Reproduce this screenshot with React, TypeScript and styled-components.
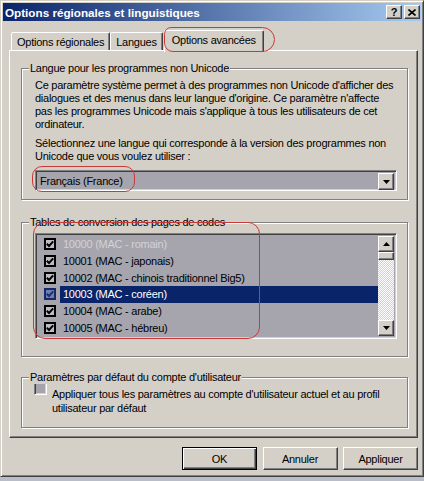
import styled, { createGlobalStyle, css } from "styled-components";

const GlobalStyle = createGlobalStyle`
  html, body {
    margin: 0;
    padding: 0;
    background: #b9bdc7;
  }
  body {
    font-family: "Liberation Sans", Arial, sans-serif;
    font-size: 11px;
    letter-spacing: -0.25px;
    color: #000;
  }
  * { box-sizing: border-box; }
`;

const raised = css`
  background: #d4d0c8;
  border: 1px solid;
  border-color: #fff #404040 #404040 #fff;
  box-shadow: inset -1px -1px 0 #808080;
`;

const sunken = css`
  border: 1px solid;
  border-color: #808080 #fff #fff #808080;
  box-shadow: inset 1px 1px 0 #404040, inset -1px -1px 0 #d4d0c8;
`;

const Window = styled.div`
  position: relative;
  width: 424px;
  height: 477px;
  background: #d4d0c8;
  border: 1px solid;
  border-color: #d4d0c8 #404040 #404040 #d4d0c8;
  box-shadow: inset 1px 1px 0 #fff, inset -1px -1px 0 #808080;
  padding: 2px;
  display: flex;
  flex-direction: column;
`;

const TitleBar = styled.div`
  height: 18px;
  display: flex;
  align-items: center;
  padding: 0 1px 0 2px;
  background: linear-gradient(to right, #0a246a, #a6caf0);
`;

const TitleText = styled.div`
  flex: 1;
  color: #fff;
  font-weight: bold;
  font-size: 11.7px;
  letter-spacing: 0;
  white-space: nowrap;
`;

const CaptionButtons = styled.div`
  display: flex;
  gap: 2px;
`;

const CaptionButton = styled.div`
  ${raised};
  width: 16px;
  height: 14px;
  display: flex;
  align-items: center;
  justify-content: center;
  font-weight: bold;
  font-size: 11px;
  letter-spacing: 0;
  line-height: 1;
`;

const Body = styled.div`
  flex: 1;
  display: flex;
  flex-direction: column;
  padding: 9px 3px 4px 6px;
`;

const TabStrip = styled.div`
  height: 20px;
  display: flex;
  align-items: flex-end;
  padding-left: 2px;
`;

const Tab = styled.div<{ $active?: boolean }>`
  position: relative;
  height: 18px;
  padding: 3px 5px 0;
  border: 1px solid;
  border-bottom: none;
  border-color: #fff #404040 transparent #fff;
  border-radius: 2px 2px 0 0;
  box-shadow: inset -1px 0 0 #808080;
  background: #d4d0c8;
  white-space: nowrap;
  ${(p) =>
    p.$active &&
    css`
      z-index: 1;
      height: 22px;
      margin: 0 -1px -2px 1px;
      padding: 3px 7px 0;
    `}
`;

const TabPanel = styled.div`
  ${raised};
  flex: 1;
  display: flex;
  flex-direction: column;
  padding: 17px 9px 0 11px;
`;

const Group = styled.div<{ $gap?: number }>`
  position: relative;
  margin-top: ${(p) => p.$gap ?? 0}px;
  border: 1px solid #808080;
  box-shadow: inset 1px 1px 0 #fff, 1px 1px 0 #fff;
  padding: 10px 10px 8px 13px;
`;

const Legend = styled.span`
  position: absolute;
  top: -7px;
  left: 7px;
  padding: 0 1px 0 1px;
  background: #d4d0c8;
  line-height: 13px;
  white-space: nowrap;
`;

const Paragraph = styled.p<{ $top?: number }>`
  margin: ${(p) => p.$top ?? 0}px 0 0;
  line-height: 13px;
  white-space: nowrap;
`;

const Combo = styled.div`
  ${sunken};
  margin-top: 7px;
  height: 21px;
  display: flex;
  align-items: stretch;
  padding: 2px;
  background: #a6a5ad;
`;

const ComboValue = styled.div`
  flex: 1;
  display: flex;
  align-items: center;
  padding-left: 2px;
`;

const ArrowButton = styled.div<{ $h?: number }>`
  ${raised};
  width: 16px;
  height: ${(p) => p.$h ?? 17}px;
  display: flex;
  align-items: center;
  justify-content: center;
`;

const ListBox = styled.div`
  ${sunken};
  height: 106px;
  display: flex;
  padding: 2px;
  background: #a6a5ad;
`;

const Rows = styled.div`
  flex: 1;
  display: flex;
  flex-direction: column;
`;

const Row = styled.div`
  height: 17px;
  display: flex;
  align-items: center;
  padding-left: 6px;
`;

const Check = styled.div<{ $selected?: boolean }>`
  width: 12px;
  height: 12px;
  border: 2px solid ${(p) => (p.$selected ? "#14286a" : "#000")};
  background: ${(p) => (p.$selected ? "#6f80ad" : "#bdbcc3")};
  display: flex;
  align-items: center;
  justify-content: center;
  margin-right: 4px;
`;

const ItemLabel = styled.div<{ $selected?: boolean; $muted?: boolean }>`
  flex: 1;
  align-self: stretch;
  display: flex;
  align-items: center;
  padding-left: 3px;
  white-space: nowrap;
  color: ${(p) => (p.$selected ? "#fff" : p.$muted ? "#d2d2d6" : "#000")};
  background: ${(p) => (p.$selected ? "#0a246a" : "transparent")};
`;

const ScrollBar = styled.div`
  width: 16px;
  display: flex;
  flex-direction: column;
`;

const ScrollThumb = styled.div`
  ${raised};
  height: 8px;
`;

const ScrollTrack = styled.div`
  flex: 1;
  background: repeating-conic-gradient(#d4d0c8 0 25%, #fff 0 50%) 0 0 / 2px 2px;
`;

const CheckRow = styled.div`
  display: flex;
  align-items: flex-start;
`;

const DisabledCheck = styled.div`
  ${sunken};
  flex: none;
  width: 13px;
  height: 13px;
  margin: -5px 5px 0 -1px;
  background: #a6a3ab;
`;

const CheckText = styled.div`
  line-height: 14px;
  white-space: nowrap;
`;

const ButtonRow = styled.div`
  display: flex;
  justify-content: flex-end;
  gap: 5.5px;
  padding-top: 9px;
`;

const PushButton = styled.div<{ $default?: boolean }>`
  ${raised};
  width: 75px;
  height: 23px;
  display: flex;
  align-items: center;
  justify-content: center;
  ${(p) =>
    p.$default &&
    css`
      border: 1px solid #000;
      box-shadow: inset 1px 1px 0 #fff, inset -1px -1px 0 #404040,
        inset -2px -2px 0 #808080;
    `}
`;

const Annotation = styled.div<{ $x: number; $y: number; $w: number; $h: number; $r: string }>`
  position: absolute;
  left: ${(p) => p.$x - 1}px;
  top: ${(p) => p.$y - 1}px;
  width: ${(p) => p.$w}px;
  height: ${(p) => p.$h}px;
  border: 1px solid #c83a3a;
  border-radius: ${(p) => p.$r};
  pointer-events: none;
  z-index: 5;
`;

const Down = () => (
  <svg width="7" height="4" viewBox="0 0 7 4">
    <polygon points="0,0 7,0 3.5,4" fill="#000" />
  </svg>
);

const Up = () => (
  <svg width="7" height="4" viewBox="0 0 7 4">
    <polygon points="0,4 7,4 3.5,0" fill="#000" />
  </svg>
);

const Tick = ({ color }: { color: string }) => (
  <svg width="8" height="8" viewBox="0 0 8 8">
    <polyline points="0.8,3.8 3,6 7.2,1.4" fill="none" stroke={color} strokeWidth="2" />
  </svg>
);

const Close = () => (
  <svg width="8" height="7" viewBox="0 0 8 7">
    <path d="M0.5 0.5 L7.5 6.5 M7.5 0.5 L0.5 6.5" stroke="#000" strokeWidth="1.6" />
  </svg>
);

const codePages = [
  { label: "10000 (MAC - romain)", muted: true },
  { label: "10001 (MAC - japonais)" },
  { label: "10002 (MAC - chinois traditionnel Big5)" },
  { label: "10003 (MAC - coréen)", selected: true },
  { label: "10004 (MAC - arabe)" },
  { label: "10005 (MAC - hébreu)" },
];

const App = () => {
  return (
    <>
      <GlobalStyle />
      <Window>
        <TitleBar>
          <TitleText>Options régionales et linguistiques</TitleText>
          <CaptionButtons>
            <CaptionButton>?</CaptionButton>
            <CaptionButton>
              <Close />
            </CaptionButton>
          </CaptionButtons>
        </TitleBar>
        <Body>
          <TabStrip>
            <Tab>Options régionales</Tab>
            <Tab>Langues</Tab>
            <Tab $active>Options avancées</Tab>
          </TabStrip>
          <TabPanel>
            <Group>
              <Legend>Langue pour les programmes non Unicode</Legend>
              <Paragraph>
                Ce paramètre système permet à des programmes non Unicode d'afficher des
                <br />
                dialogues et des menus dans leur langue d'origine. Ce paramètre n'affecte
                <br />
                pas les programmes Unicode mais s'applique à tous les utilisateurs de cet
                <br />
                ordinateur.
              </Paragraph>
              <Paragraph $top={6}>
                Sélectionnez une langue qui corresponde à la version des programmes non
                <br />
                Unicode que vous voulez utiliser :
              </Paragraph>
              <Combo>
                <ComboValue>Français (France)</ComboValue>
                <ArrowButton>
                  <Down />
                </ArrowButton>
              </Combo>
            </Group>
            <Group $gap={22} style={{ paddingBottom: 17 }}>
              <Legend>Tables de conversion des pages de codes</Legend>
              <ListBox>
                <Rows>
                  {codePages.map((item) => (
                    <Row key={item.label}>
                      <Check $selected={item.selected}>
                        <Tick color={item.selected ? "#1c2f70" : "#000"} />
                      </Check>
                      <ItemLabel $selected={item.selected} $muted={item.muted}>
                        {item.label}
                      </ItemLabel>
                    </Row>
                  ))}
                </Rows>
                <ScrollBar>
                  <ArrowButton $h={16}>
                    <Up />
                  </ArrowButton>
                  <ScrollThumb />
                  <ScrollTrack />
                  <ArrowButton $h={16}>
                    <Down />
                  </ArrowButton>
                </ScrollBar>
              </ListBox>
            </Group>
            <Group $gap={20} style={{ paddingTop: 9, paddingBottom: 12 }}>
              <Legend>Paramètres par défaut du compte d'utilisateur</Legend>
              <CheckRow>
                <DisabledCheck />
                <CheckText>
                  Appliquer tous les paramètres au compte d'utilisateur actuel et au profil
                  <br />
                  utilisateur par défaut
                </CheckText>
              </CheckRow>
            </Group>
          </TabPanel>
          <ButtonRow>
            <PushButton $default>OK</PushButton>
            <PushButton>Annuler</PushButton>
            <PushButton>Appliquer</PushButton>
          </ButtonRow>
        </Body>
        <Annotation $x={164} $y={27} $w={111} $h={25} $r="8px 14px 14px 10px" />
        <Annotation $x={32} $y={166} $w={103} $h={26} $r="10px" />
        <Annotation $x={33} $y={222} $w={227} $h={117} $r="12px" />
      </Window>
    </>
  );
};

export default App;
